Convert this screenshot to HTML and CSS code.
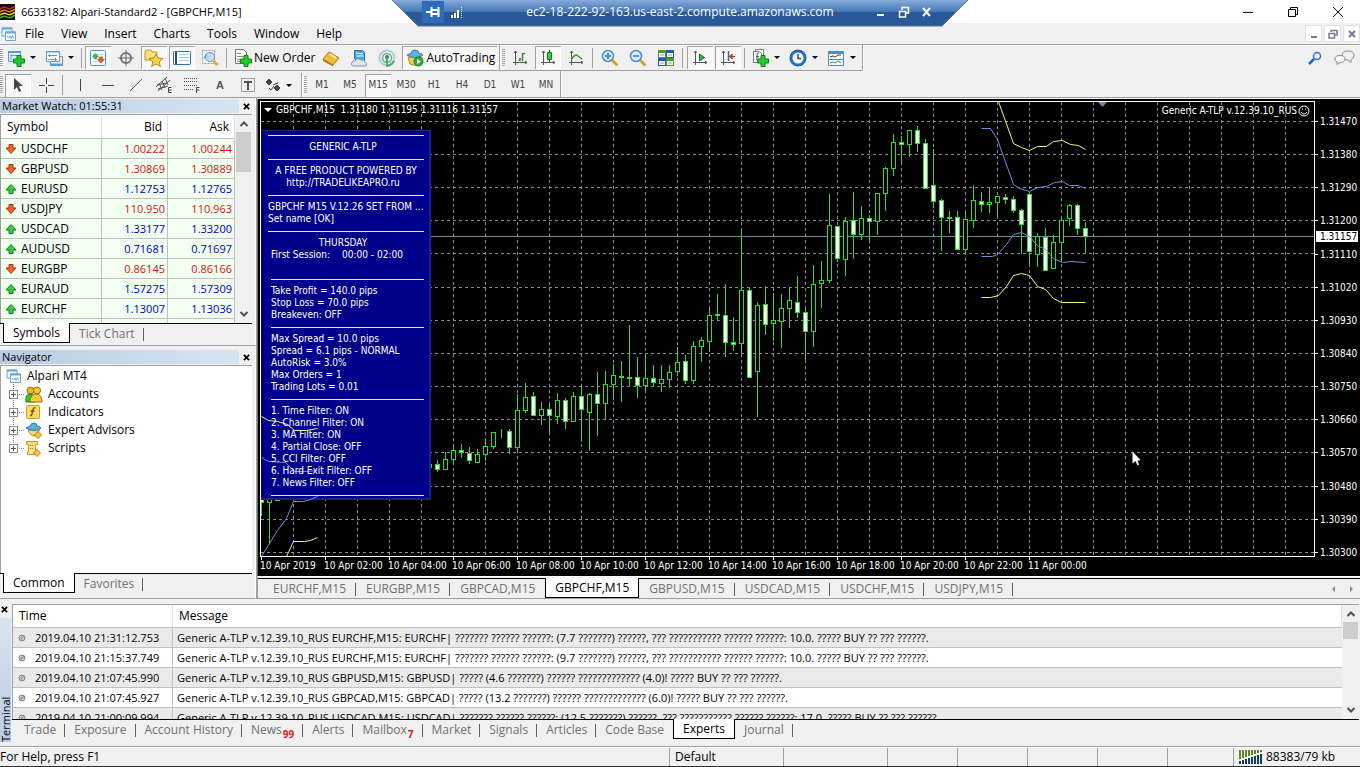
FILE: index.html
```html
<!DOCTYPE html>
<html lang="en">
<head>
<meta charset="utf-8">
<title>6633182: Alpari-Standard2 - [GBPCHF,M15]</title>
<link rel="stylesheet" href="styles.css">
</head>
<body>
<svg class="defs" width="0" height="0" aria-hidden="true">
  <symbol id="i-mt" viewBox="0 0 16 16"><path d="M1 2h10v8H1z" fill="#eaf5fd" stroke="#6ba6d4"/><path d="M1 2.500h10" stroke="#6ba6d4" stroke-width="2"/><path d="M4.500 6h10v8.500h-10z" fill="#fff" stroke="#6ba6d4"/><path d="M4.500 6.500h10" stroke="#6ba6d4" stroke-width="2"/><path d="M6 10l1.500 2 1.500-2 1 2.500 1.500-3 1 2.500" fill="none" stroke="#6ba6d4"/></symbol>
  <symbol id="i-down" viewBox="0 0 12 12"><path d="M4 1.500h4V5h3L6 10.500 1 5h3z" fill="#f0642d" stroke="#a8330c"/></symbol>
  <symbol id="i-up" viewBox="0 0 12 12"><path d="M4 10.500h4V7h3L6 1.500 1 7h3z" fill="#3dcc4a" stroke="#0f7a1c"/></symbol>
  <symbol id="i-plus" viewBox="0 0 12 12"><path d="M4 .5h4V4h3.500v4H8v3.500H4V8H.5V4H4z" fill="#22cc2c" stroke="#0b8413"/></symbol>
  <symbol id="i-x" viewBox="0 0 8 8"><path d="M1 1l6 6M7 1L1 7" stroke="currentColor" stroke-width="2"/></symbol>
  <symbol id="i-chup" viewBox="0 0 10 10"><path d="M1.500 7L5 3.500 8.500 7" fill="none" stroke="#505050" stroke-width="2"/></symbol>
  <symbol id="i-chdown" viewBox="0 0 10 10"><path d="M1.500 3L5 6.500 8.500 3" fill="none" stroke="#505050" stroke-width="2"/></symbol>
  <symbol id="i-axes" viewBox="0 0 16 16"><path d="M3.500 1v14M1 12.500h14M2 3l1.500-2L5 3M13 11l2 1.500-2 1.500" fill="none" stroke="#555"/></symbol>
  <symbol id="i-dot" viewBox="0 0 8 8"><circle cx="4" cy="4" r="3" fill="#c4c4c4" stroke="#858585"/><path d="M2.500 5.500l3-3" stroke="#777"/></symbol>
</svg>

<header class="titlebar">
  <svg class="applogo" viewBox="0 0 15 16"><path d="M0 0h15v16H0z" fill="#111"/><g fill="none" stroke-width="1.500"><path d="M0 5q4-3 7-1t8-2" stroke="#d8271c"/><path d="M0 8q4-3 7-1t8-2" stroke="#f07b1e"/><path d="M0 11q4-3 7-1t8-2" stroke="#e8d33a"/><path d="M0 14q4-3 7-1t8-2" stroke="#49b33a"/></g></svg>
  <h1>6633182: Alpari-Standard2 - [GBPCHF,M15]</h1>
  <div class="rdp">
    <svg class="rdpbg" viewBox="0 0 576 27" preserveAspectRatio="none"><defs><linearGradient id="rg" x1="0" y1="0" x2="0" y2="1"><stop offset="0" stop-color="#86abd9"/><stop offset=".46" stop-color="#4377b5"/><stop offset=".47" stop-color="#2a5795"/><stop offset="1" stop-color="#2c5a99"/></linearGradient></defs><path d="M0 0h576l-26 26H26z" fill="url(#rg)"/><path d="M0 0l26 26h524l26-26" fill="none" stroke="#55708f"/></svg>
    <button class="pin" aria-label="Pin"><svg width="14" height="12" viewBox="0 0 14 12"><path d="M0 6h5M5.500 1v10M6 4h6v4H6M12.500 1v10" stroke="#fff" stroke-width="2" fill="none"/></svg></button>
    <svg width="12" height="12" viewBox="0 0 12 12"><path d="M1 12v-3M4 12V7M7 12V4" stroke="#fff" stroke-width="2"/><path d="M10.500 12V1" stroke="#cfe" stroke-dasharray="1 1"/></svg>
    <span class="host">ec2-18-222-92-163.us-east-2.compute.amazonaws.com</span>
    <button aria-label="Minimize session"><svg width="12" height="12"><path d="M2 9h7" stroke="#fff" stroke-width="2"/></svg></button>
    <button aria-label="Restore session"><svg width="12" height="12"><path d="M4 4V1.500h6.500V7H8M1.500 5.500h6V11h-6zM1 5.500h7" fill="none" stroke="#fff" stroke-width="1.500"/></svg></button>
    <button aria-label="Close session"><svg width="12" height="12"><path d="M2 2l7 8M9 2l-7 8" stroke="#fff" stroke-width="2"/></svg></button>
  </div>
  <div class="winbtns">
    <button aria-label="Minimize"><svg width="12" height="12"><path d="M1 6.500h10" stroke="#000"/></svg></button>
    <button aria-label="Restore"><svg width="12" height="12"><path d="M1.500 3.500h7v7h-7zM3.500 3V1.500h7v7H9" fill="none" stroke="#000"/></svg></button>
    <button aria-label="Close"><svg width="12" height="12"><path d="M1 1l10 10M11 1L1 11" stroke="#000"/></svg></button>
  </div>
</header>

<nav class="menubar" aria-label="Main menu">
  <svg width="16" height="16"><use href="#i-mt"/></svg>
  <button>File</button><button>View</button><button>Insert</button><button>Charts</button><button>Tools</button><button>Window</button><button>Help</button>
  <div class="mdibtns">
    <button aria-label="Minimize chart"><svg width="10" height="10"><path d="M2 8h6" stroke="#6f7d8c" stroke-width="2"/></svg></button>
    <button aria-label="Restore chart"><svg width="10" height="10"><path d="M3 3V1.500h6V6H7M1 4.500h5.500V9H1z" fill="none" stroke="#6f7d8c" stroke-width="1.500"/></svg></button>
    <button aria-label="Close chart"><svg width="8" height="8"><use href="#i-x"/></svg></button>
  </div>
</nav>

<div class="toolbar">
  <div class="group">
    <span class="grip"></span>
    <button class="dd" aria-label="New chart"><svg width="18" height="18"><path d="M1.500 2.500h12v10h-12z" fill="#e9f3fb" stroke="#5a9bcd"/><path d="M1 3h13" stroke="#5a9bcd" stroke-width="2"/><path d="M3 6.500h8M4 5v6" stroke="#5a9bcd"/><use href="#i-plus" x="6" y="6" width="12" height="12"/></svg><i class="caret"></i></button>
    <button class="dd" aria-label="Profiles"><svg width="18" height="18"><path d="M5.500 7.500h12v9h-12z" fill="#e9f3fb" stroke="#5a9bcd"/><path d="M5 15.500h13" stroke="#5a9bcd" stroke-width="2"/><path d="M1.500 2.500h13v10h-13z" fill="#fff" stroke="#5a9bcd"/><path d="M1 3h14M3 6.500h9M4.500 5v3M3 10.500h9M10.500 9v3" stroke="#5a9bcd"/></svg><i class="caret"></i></button>
    <span class="sep"></span>
    <button class="on" aria-label="Market Watch"><svg width="18" height="18"><rect x="1.500" y="1.500" width="15" height="15" rx="1" fill="#f4fafe" stroke="#4d92c8"/><path d="M4 5.500h10M4 9h10M4 12.500h10" stroke="#c7dbea"/><use href="#i-up" x="3" y="3" width="7" height="8"/><use href="#i-down" x="8" y="7" width="8" height="8"/></svg></button>
    <button aria-label="Data Window"><svg width="18" height="18"><circle cx="9" cy="9" r="5" fill="none" stroke="#777" stroke-width="2"/><path d="M9 1v16M1 9h16" stroke="#666"/></svg></button>
    <button class="on" aria-label="Navigator"><svg width="20" height="18"><path d="M1 3l1-2h5l1 2h5v8H1z" fill="#f8e07a" stroke="#c1952a"/><path d="M12 5l2 4 5 .5-4 3.500 1.500 4.500-4.500-2.500L7.500 17.500 9 13 5 9.500l5-.5z" fill="#fbd64c" stroke="#b8861e"/></svg></button>
    <button class="on" aria-label="Terminal"><svg width="20" height="16"><rect x="1.500" y="1.500" width="17" height="13" rx="1" fill="#fff" stroke="#2e6fae"/><path d="M4 2v12" stroke="#23517d" stroke-width="2"/><path d="M7 4.500h10M7 7.500h10M7 10.500h10" stroke="#a8cbe8"/></svg></button>
    <button aria-label="Strategy Tester"><svg width="18" height="18"><path d="M1.500 1.500h12v13h-12z" fill="#edf6fc" stroke="#91a4b4" stroke-dasharray="2 1"/><path d="M3 10l2-5 2 5 3-6" fill="none" stroke="#5a8fb8"/><circle cx="9" cy="8" r="4.500" fill="#bcdcf3" fill-opacity=".8" stroke="#7093b0"/><path d="M12.500 12l4 4" stroke="#dba838" stroke-width="3"/></svg></button>
    <span class="sep"></span>
    <button class="txt neworder"><svg width="18" height="18"><path d="M1.500.5h8l3 3v11h-11z" fill="#fff" stroke="#777"/><path d="M3 4.500h4M3 7.500h7M3 10.500h7M3 12.500h4" stroke="#888"/><use href="#i-plus" x="6" y="6" width="12" height="12"/></svg>New Order</button>
    <button aria-label="MetaEditor"><svg width="18" height="18"><path d="M1 10l6-7 10 6-6 7z" fill="#f0bc3c" stroke="#a87414"/><path d="M1 10v2l10 5.500V16z" fill="#b77c16"/><path d="M8 5l6 4" stroke="#ffe9a0" stroke-width="2"/></svg></button>
    <button aria-label="Virtual Hosting"><svg width="18" height="18"><path d="M4.500 1.500h8l2 2v8h-8l-2-2z" fill="#44a5e3" stroke="#2076b8"/><path d="M6 4l7 1M6.500 7h7" stroke="#fff"/><path d="M3 17q-3-1-1-4 1-2 3-1 2-4 6-1 3-1 4 2 3 1 1 4z" fill="#dfe6ee" stroke="#8092a8"/></svg></button>
    <button aria-label="Signals"><svg width="18" height="18"><g fill="none"><circle cx="9" cy="9" r="7.500" stroke="#b4cbd9" stroke-width="2"/><circle cx="9" cy="9" r="4.500" stroke="#72a9a6" stroke-width="1.500"/></g><circle cx="9" cy="8" r="2" fill="#2b8c53"/><path d="M9 9v8q5-1 7-5" fill="none" stroke="#49b067" stroke-width="2"/></svg></button>
    <button class="txt auto on"><svg width="18" height="18"><path d="M2 8l2 7q5 3 10 0l2-7z" fill="#f3cc4e" stroke="#b38a20"/><path d="M1 6q3-2 4-1 0-4 4-4t4 4q3-1 4 1-8 5-16 0z" fill="#5fb4dd" stroke="#2f7fae"/><circle cx="12.500" cy="12.500" r="4.500" fill="#27b13a" stroke="#0f7f20"/><path d="M11 10l4 2.500-4 2.500z" fill="#fff"/></svg>AutoTrading</button>
    <span class="end"></span>
    <span class="grip"></span>
    <button aria-label="Bar Chart"><svg width="16" height="16"><use href="#i-axes"/><path d="M8 11V8M8 10H6.500M10.500 3v8M10.500 3.500H13" stroke="#3a8a3a" stroke-width="1.500"/></svg></button>
    <button class="on" aria-label="Candlesticks"><svg width="16" height="16"><use href="#i-axes"/><path d="M9.500 0v12" stroke="#0a7a14"/><path d="M7.500 2.500h4v7h-4z" fill="#35d042" stroke="#0a7a14"/></svg></button>
    <button aria-label="Line Chart"><svg width="16" height="16"><use href="#i-axes"/><path d="M4 9q3-6 6-3l4 3" fill="none" stroke="#3a9a3a" stroke-width="1.500"/></svg></button>
    <span class="sep"></span>
    <button aria-label="Zoom In"><svg width="18" height="18"><path d="M10.500 10.500l6 6" stroke="#d6a22e" stroke-width="3"/><circle cx="7" cy="7" r="5.500" fill="#d4ebfa" stroke="#4a8fd0" stroke-width="1.500"/><path d="M4 7h6M7 4v6" stroke="#3578b8" stroke-width="1.500"/></svg></button>
    <button aria-label="Zoom Out"><svg width="18" height="18"><path d="M10.500 10.500l6 6" stroke="#d6a22e" stroke-width="3"/><circle cx="7" cy="7" r="5.500" fill="#d4ebfa" stroke="#4a8fd0" stroke-width="1.500"/><path d="M4 7h6" stroke="#3578b8" stroke-width="1.500"/></svg></button>
    <button aria-label="Tile Windows"><svg width="18" height="18"><path d="M1 1h8v8H1zM9 9h8v8H9z" fill="#4c9c2c"/><path d="M9 1h8v8H9zM1 9h8v8H1z" fill="#2c56a8"/><path d="M2 4h6v4H2zM10 4h6v4h-6zM2 12h6v4H2zM10 12h6v4h-6z" fill="#f4f9ff"/><path d="M3 6h4M11 6h4M3 14h4M11 14h4" stroke="#8ab"/></svg></button>
    <span class="sep"></span>
    <button class="on" aria-label="Auto Scroll"><svg width="16" height="16"><use href="#i-axes"/><path d="M7.500 4l5 3.500-5 3.500z" fill="#2db53a" stroke="#117a1c"/></svg></button>
    <button class="on" aria-label="Chart Shift"><svg width="16" height="16"><use href="#i-axes"/><path d="M8.500 1v10" stroke="#2d63b8" stroke-width="1.500"/><path d="M15 6.500h-4M12.500 4L10 6.500 12.500 9" fill="none" stroke="#b03c14" stroke-width="1.500"/></svg></button>
    <span class="sep"></span>
    <button class="dd" aria-label="Indicators"><svg width="18" height="18"><path d="M4.500.5h8v12h-8z" fill="#fff" stroke="#777"/><path d="M2.500 2.500h6l2 2v9h-8z" fill="#fff" stroke="#777"/><path d="M8 4q-2-1-2 2v5M5 7.500h3" fill="none" stroke="#555"/><use href="#i-plus" x="6" y="6" width="12" height="12"/></svg><i class="caret"></i></button>
    <button class="dd" aria-label="Periods"><svg width="18" height="18"><circle cx="9" cy="9" r="8" fill="#2a74c4" stroke="#19529a"/><circle cx="9" cy="9" r="5.500" fill="#eef5fb"/><path d="M9 5v4.500h3" fill="none" stroke="#444" stroke-width="1.500"/></svg><i class="caret"></i></button>
    <button class="dd" aria-label="Templates"><svg width="18" height="18"><path d="M1.500 2.500h15v14h-15z" fill="#f6fbff" stroke="#4d8dc8"/><path d="M1 3.500h16" stroke="#4d8dc8" stroke-width="3"/><path d="M1 10.500h16" stroke="#4d8dc8"/><path d="M3 8l3-1 2 1 3-2h3" fill="none" stroke="#8a2a1a"/><path d="M3 14l3-1 2 1 3-2 3 2" fill="none" stroke="#3a9a3a"/></svg><i class="caret"></i></button>
  </div>
  <div class="right">
    <button aria-label="Search"><svg width="14" height="14"><circle cx="9" cy="5" r="3.500" fill="#eef5ff" stroke="#3a70d0" stroke-width="1.500"/><path d="M6 8l-5 5" stroke="#2f5fc4" stroke-width="2.500"/></svg></button>
    <button aria-label="Chat"><svg width="22" height="16"><path d="M8 6q0-5 6-5t6 4.500q0 3-3 4v3l-3-2.500q-6 0-6-4z" fill="#f2f2f2" stroke="#8a8a8a"/><path d="M1 9q0-3.500 5-3.500T11 9t-5 3.500l-3 2v-2.500q-2-1-2-3z" fill="#fafafa" stroke="#8a8a8a"/></svg></button>
  </div>
</div>

<div class="toolbar second">
  <div class="group">
    <span class="grip"></span>
    <button class="on" aria-label="Cursor"><svg width="12" height="16"><path d="M2 1v12l3-3 2 5 2-1-2-5h4z" fill="#444"/></svg></button>
    <button aria-label="Crosshair"><svg width="16" height="16"><path d="M8.500 1v6M8.500 10v6M1 8.500h6M10 8.500h6" stroke="#444"/></svg></button>
    <span class="sep"></span>
    <button aria-label="Vertical Line"><svg width="16" height="16"><path d="M8.500 2v12" stroke="#444"/></svg></button>
    <button aria-label="Horizontal Line"><svg width="16" height="16"><path d="M2 8.500h12" stroke="#444"/></svg></button>
    <button aria-label="Trendline"><svg width="16" height="16"><path d="M2 14L14 2" stroke="#555"/></svg></button>
    <button aria-label="Equidistant Channel"><svg width="18" height="18"><path d="M1 11L12 1M3 15L15 4M4 7l3 7M7 5l3 7M10 2l3 7M2 9l10-2M3 13l10-3" stroke="#555"/><path d="M16.500 11.500h-3v5h3M13.500 14h3" fill="none" stroke="#444"/></svg></button>
    <button aria-label="Fibonacci"><svg width="18" height="18"><path d="M1 2.500h14M1 5.500h14M1 9.500h14M1 13.500h9" stroke="#555" stroke-dasharray="1 1"/><path d="M13.500 17v-5.500h3M13.500 14h3" fill="none" stroke="#444"/></svg></button>
    <button class="letter" aria-label="Text">A</button>
    <button aria-label="Text Label"><svg width="16" height="16"><path d="M1.500 1.500h13v13h-13z" fill="none" stroke="#555" stroke-dasharray="1 1"/><path d="M4 5h8M8 5v8" stroke="#555" stroke-width="2"/></svg></button>
    <button class="dd" aria-label="Arrows"><svg width="16" height="16"><path d="M4 2l3 3-3 3-3-3zM8 8l5-2M12 8l3 3-3 3-3-3z" fill="#444" stroke="#444"/><path d="M4 11l2 2 3-4" fill="none" stroke="#444"/></svg><i class="caret"></i></button>
    <span class="end"></span>
    <span class="grip"></span>
    <button class="tf">M1</button><button class="tf">M5</button><button class="tf on">M15</button><button class="tf">M30</button><button class="tf">H1</button><button class="tf">H4</button><button class="tf">D1</button><button class="tf">W1</button><button class="tf">MN</button>
  </div>
</div>

<main>
  <aside class="side">
    <section class="panel market">
      <header><h2>Market Watch: 01:55:31</h2><button aria-label="Close Market Watch"><svg width="7" height="7"><use href="#i-x"/></svg></button></header>
      <div class="scrollbox">
        <table class="quotes">
          <colgroup><col class="sym"><col class="bid"><col class="ask"></colgroup>
          <thead><tr><th>Symbol</th><th>Bid</th><th>Ask</th></tr></thead>
          <tbody>
            <tr class="dn"><td><svg><use href="#i-down"/></svg>USDCHF</td><td>1.00222</td><td>1.00244</td></tr>
            <tr class="dn"><td><svg><use href="#i-down"/></svg>GBPUSD</td><td>1.30869</td><td>1.30889</td></tr>
            <tr><td><svg><use href="#i-up"/></svg>EURUSD</td><td>1.12753</td><td>1.12765</td></tr>
            <tr class="dn"><td><svg><use href="#i-down"/></svg>USDJPY</td><td>110.950</td><td>110.963</td></tr>
            <tr><td><svg><use href="#i-up"/></svg>USDCAD</td><td>1.33177</td><td>1.33200</td></tr>
            <tr><td><svg><use href="#i-up"/></svg>AUDUSD</td><td>0.71681</td><td>0.71697</td></tr>
            <tr class="dn"><td><svg><use href="#i-down"/></svg>EURGBP</td><td>0.86145</td><td>0.86166</td></tr>
            <tr><td><svg><use href="#i-up"/></svg>EURAUD</td><td>1.57275</td><td>1.57309</td></tr>
            <tr><td><svg><use href="#i-up"/></svg>EURCHF</td><td>1.13007</td><td>1.13036</td></tr>
            <tr><td></td><td></td><td></td></tr>
          </tbody>
        </table>
        <div class="sbar"><svg width="10" height="10"><use href="#i-chup"/></svg><span class="thumb tall"></span><svg width="10" height="10"><use href="#i-chdown"/></svg></div>
      </div>
      <div class="tabs"><button class="cur">Symbols</button><button>Tick Chart</button></div>
    </section>
    <section class="panel navi">
      <header><h2>Navigator</h2><button aria-label="Close Navigator"><svg width="7" height="7"><use href="#i-x"/></svg></button></header>
      <ul class="tree">
        <li class="root"><svg width="16" height="16"><use href="#i-mt"/></svg>Alpari MT4</li>
        <li><i class="box"></i><svg width="18" height="17"><circle cx="5.500" cy="4.500" r="3.500" fill="#e9b91c" stroke="#96700a"/><circle cx="12" cy="4.500" r="3.500" fill="#f2ca33" stroke="#96700a"/><path d="M1 16q-1-8 4-8t5 8z" fill="#35c435" stroke="#168016"/><path d="M5 16q0-8 6-8t6 8z" fill="#f2ca33" stroke="#96700a"/></svg>Accounts</li>
        <li><i class="box"></i><svg width="18" height="17"><rect x="1.500" y="1.500" width="13" height="13" rx="1" fill="#fbdc68" stroke="#c89d27"/><path d="M10.500 4q-2-1-2.500 2l-1 4q-.5 2-2 1.500M5.500 7h4" fill="none" stroke="#7d5a08" stroke-width="1.500"/></svg>Indicators</li>
        <li><i class="box"></i><svg width="18" height="17"><path d="M3 8q2 6 7 6l5-6z" fill="#f7d66a" stroke="#b58a2a"/><path d="M1 6q3-2 4-2 1-3 4-3t3 3q3 0 4 2-7 5-15 0z" fill="#55b0dd" stroke="#2f7fae"/><path d="M13 9.500l3.500 3.500-3.500 3.500L9.500 13z" fill="#f4c64a" stroke="#b07f1a"/></svg>Expert Advisors</li>
        <li><i class="box"></i><svg width="18" height="17"><path d="M1.500 1.500h11v3h-2v7h2v3h-10v-3h1v-7h-2z" fill="#fae08a" stroke="#c09a30"/><path d="M5 5.500h4M5 8.500h4" stroke="#a57c1b" stroke-dasharray="1 1"/><path d="M12 9.500l3.500 3.500-3.500 3.500L8.500 13z" fill="#f4c64a" stroke="#b07f1a"/></svg>Scripts</li>
      </ul>
      <div class="tabs"><button class="cur">Common</button><button>Favorites</button></div>
    </section>
  </aside>

  <section class="work">
    <div class="chart">
      <div class="plot">
        <svg id="plot" class="canvas" width="100%" height="100%" aria-label="GBPCHF M15 candlestick chart"></svg>
        <div class="caption"><i class="tri"></i><span>GBPCHF,M15&nbsp; 1.31180 1.31195 1.31116 1.31157</span></div>
        <div class="expert">Generic A-TLP v.12.39.10_RUS<svg width="12" height="12"><circle cx="6" cy="6" r="5" fill="none" stroke="#fff"/><path d="M3 7q3 4 6 0M4 4h1M7 4h1" fill="none" stroke="#fff"/></svg></div>
        <div class="info">
          <hr>
          <p class="mid">GENERIC A-TLP</p>
          <hr>
          <p class="mid wide">A FREE PRODUCT POWERED BY</p>
          <p class="mid">http://TRADELIKEAPRO.ru</p>
          <hr>
          <p class="out">GBPCHF M15 V.12.26 SET FROM ...</p>
          <p class="out">Set name [OK]</p>
          <hr>
          <p class="mid">THURSDAY</p>
          <p class="two"><span>First Session:</span><span>00:00 - 02:00</span></p>
          <p>&nbsp;</p>
          <hr class="in">
          <p>Take Profit = 140.0 pips</p>
          <p>Stop Loss = 70.0 pips</p>
          <p>Breakeven: OFF</p>
          <hr class="in">
          <p>Max Spread = 10.0 pips</p>
          <p>Spread = 6.1 pips - NORMAL</p>
          <p>AutoRisk = 3.0%</p>
          <p>Max Orders = 1</p>
          <p>Trading Lots = 0.01</p>
          <hr class="in">
          <p>1. Time Filter: ON</p>
          <p>2. Channel Filter: ON</p>
          <p>3. MA Filter: ON</p>
          <p>4. Partial Close: OFF</p>
          <p>5. CCI Filter: OFF</p>
          <p>6. Hard Exit Filter: OFF</p>
          <p>7. News Filter: OFF</p>
          <hr class="in">
        </div>
        <svg class="cursor" width="8" height="15"><path d="M.5.5v12l3-2.500 2 4.500 1.500-1-1.500-4H9z" fill="#fff"/></svg>
      </div>
      <div class="scale"><span>1.31470</span><span>1.31380</span><span>1.31290</span><span>1.31200</span><span>1.31110</span><span>1.31020</span><span>1.30930</span><span>1.30840</span><span>1.30750</span><span>1.30660</span><span>1.30570</span><span>1.30480</span><span>1.30390</span><span>1.30300</span><b>1.31157</b></div>
      <div class="times"><span>10 Apr 2019</span><span>10 Apr 02:00</span><span>10 Apr 04:00</span><span>10 Apr 06:00</span><span>10 Apr 08:00</span><span>10 Apr 10:00</span><span>10 Apr 12:00</span><span>10 Apr 14:00</span><span>10 Apr 16:00</span><span>10 Apr 18:00</span><span>10 Apr 20:00</span><span>10 Apr 22:00</span><span>11 Apr 00:00</span></div>
    </div>
    <div class="charttabs">
      <div class="tabs"><button>EURCHF,M15</button><button>EURGBP,M15</button><button>GBPCAD,M15</button><button class="cur">GBPCHF,M15</button><button>GBPUSD,M15</button><button>USDCAD,M15</button><button>USDCHF,M15</button><button>USDJPY,M15</button></div>
      <div class="arrows"><button aria-label="Previous tab"><svg width="5" height="8"><path d="M4 1v6L1 4z" fill="#888"/></svg></button><button aria-label="Next tab"><svg width="5" height="8"><path d="M1 1v6l3-3z" fill="#888"/></svg></button></div>
    </div>
  </section>
</main>

<section class="terminal">
  <div class="strip"><button aria-label="Close Terminal"><svg width="7" height="7"><use href="#i-x"/></svg></button><h2>Terminal</h2></div>
  <div class="termbody">
    <div class="scrollbox">
      <table class="log">
        <colgroup><col class="time"><col></colgroup>
        <thead><tr><th>Time</th><th>Message</th></tr></thead>
        <tbody>
          <tr><td><svg><use href="#i-dot"/></svg>2019.04.10 21:31:12.753</td><td>Generic A-TLP v.12.39.10_RUS EURCHF,M15: EURCHF| ??????? ?????? ??????: (7.7 ???????) ??????, ??? ??????????? ?????? ??????: 10.0. ????? BUY ?? ??? ??????.</td></tr>
          <tr><td><svg><use href="#i-dot"/></svg>2019.04.10 21:15:37.749</td><td>Generic A-TLP v.12.39.10_RUS EURCHF,M15: EURCHF| ??????? ?????? ??????: (9.7 ???????) ??????, ??? ??????????? ?????? ??????: 10.0. ????? BUY ?? ??? ??????.</td></tr>
          <tr><td><svg><use href="#i-dot"/></svg>2019.04.10 21:07:45.990</td><td>Generic A-TLP v.12.39.10_RUS GBPUSD,M15: GBPUSD| ????? (4.6 ???????) ?????? ????????????? (4.0)! ????? BUY ?? ??? ??????.</td></tr>
          <tr><td><svg><use href="#i-dot"/></svg>2019.04.10 21:07:45.927</td><td>Generic A-TLP v.12.39.10_RUS GBPCAD,M15: GBPCAD| ????? (13.2 ???????) ?????? ????????????? (6.0)! ????? BUY ?? ??? ??????.</td></tr>
          <tr><td><svg><use href="#i-dot"/></svg>2019.04.10 21:00:09.994</td><td>Generic A-TLP v.12.39.10_RUS USDCAD,M15: USDCAD| ??????? ?????? ??????: (12.5 ???????) ??????, ??? ??????????? ?????? ??????: 17.0. ????? BUY ?? ??? ??????</td></tr>
        </tbody>
      </table>
      <div class="sbar"><svg width="10" height="10"><use href="#i-chup"/></svg><span class="thumb"></span><svg width="10" height="10"><use href="#i-chdown"/></svg></div>
    </div>
    <div class="tabs"><button>Trade</button><button>Exposure</button><button>Account History</button><button>News<sub>99</sub></button><button>Alerts</button><button>Mailbox<sub>7</sub></button><button>Market</button><button>Signals</button><button>Articles</button><button>Code Base</button><button class="cur">Experts</button><button>Journal</button></div>
  </div>
</section>

<footer class="status">
  <span class="help">For Help, press F1</span><span class="profile">Default</span><span class="w104"></span><span class="w70"></span><span class="w70"></span><span class="w70"></span><span class="w70"></span><span class="w66"></span>
  <span class="net"><svg width="24" height="14"><g stroke-width="2"><path d="M1 0v9M4 0v8M7 0v7M10 0v6M13 0v5M16 0v4M19 0v3M22 0v2" stroke="#6d8020"/><path d="M1 11v3M4 10v4M7 9v5M10 8v6M13 7v7M16 6v8M19 5v9M22 4v10" stroke="#123f5c"/></g></svg>88383/79 kb</span>
</footer>
<script src="chart.js"></script>
</body>
</html>
```

FILE: styles.css
```css
* { box-sizing: border-box; }
body {
  margin: 0;
  height: 100vh;
  display: flex;
  flex-direction: column;
  overflow: hidden;
  background: #f0f0f0;
  color: #000;
  font: 12px/16px "Open Sans", "Noto Sans", sans-serif;
}
button {
  border: 0;
  padding: 0;
  margin: 0;
  background: none;
  color: inherit;
  font: inherit;
  display: flex;
  align-items: center;
  justify-content: center;
  white-space: nowrap;
}
svg { display: block; flex: none; }
.defs { position: absolute; }
h1, h2 { margin: 0; font-size: 11px; font-weight: 400; white-space: nowrap; }
table { border-collapse: separate; border-spacing: 0; table-layout: fixed; width: 100%; }
th { font-weight: 400; text-align: left; }

.titlebar { position: relative; flex: none; height: 23px; background: #fff; display: flex; align-items: center; gap: 6px; }
.applogo { width: 15px; height: 16px; }
.winbtns { margin-left: auto; display: flex; }
.winbtns button { width: 45px; height: 22px; }
.rdp { position: absolute; z-index: 5; left: 392px; right: 392px; top: 0; height: 27px; padding: 0 33px 3px 30px; display: flex; align-items: center; color: #fff; gap: 7px; }
.rdpbg { position: absolute; inset: 0; width: 100%; height: 100%; }
.rdp > *:not(.rdpbg) { position: relative; }
.rdp .host { flex: 1; text-align: center; padding-left: 24px; }
.rdp button { width: 16px; height: 22px; }
.rdp .pin { width: 22px; background: #2d6db8; }

.menubar { flex: none; height: 22px; display: flex; align-items: center; gap: 5px; border-bottom: 1px solid #a0a0a0; box-shadow: 0 1px #fff; padding-left: 1px; }
.menubar > button { padding: 0 6px; }
.menubar > svg { margin-right: -3px; }
.mdibtns { margin-left: auto; display: flex; gap: 2px; }
.mdibtns button { width: 17px; height: 17px; background: #fff; border: 1px solid #e2e2e2; color: #6f7d8c; }

.toolbar { flex: none; height: 26px; display: flex; align-items: stretch; justify-content: space-between; }
.toolbar .group { display: flex; align-items: center; border-right: 1px solid #a0a0a0; border-bottom: 1px solid #a0a0a0; box-shadow: 1px 0 #fff; }
.toolbar button { width: 28px; height: 23px; }
.toolbar button.on { width: 26px; margin: 0 1px; background: #f8f8f8; box-shadow: inset 1px 1px #a0a0a0, inset -1px -1px #fff; }
.toolbar button.dd { width: 38px; gap: 5px; justify-content: flex-start; padding-left: 3px; }
.toolbar button.txt { width: auto; gap: 2px; }
.toolbar button.txt.on { width: auto; padding: 0 2px 0 4px; }
.toolbar .neworder { margin: 0 2px 0 4px; }
.caret { border: 3px solid transparent; border-top: 3px solid #000; border-bottom: 0; }
.grip { width: 3px; height: 18px; margin: 0 1px 0 0; background: repeating-linear-gradient(#a8a8a8 0 1px, #f0f0f0 1px 2px); }
.sep { width: 1px; height: 20px; margin: 0 3px 0 2px; background: #a0a0a0; }
.dd + .sep { margin: 0 2px 0 1px; }
.end { width: 1px; align-self: stretch; margin: 0 2px 0 1px; background: #a0a0a0; box-shadow: 1px 0 #fff; }
.toolbar .right { display: flex; align-items: center; }
.toolbar .right button { width: 30px; }
.toolbar.second { height: 27px; border-bottom: 1px solid #a0a0a0; }
.second .group { border-bottom: 0; padding-top: 2px; }
.second button { color: #444; }
.second button.tf { font: 10px/14px "DejaVu Sans Condensed", "DejaVu Sans", sans-serif; }
.second button.letter { font: 700 11px/14px "Liberation Sans", sans-serif; color: #555; }

main { flex: 1; min-height: 0; display: flex; }
.side { flex: none; width: 257px; display: flex; flex-direction: column; gap: 3px; border-right: 1px solid #a0a0a0; }
.panel { display: flex; flex-direction: column; padding: 1px 3px 5px 0; border-bottom: 1px solid #a0a0a0; border-right: 1px solid #fff; }
.market { flex: none; height: 248px; padding-bottom: 2px; }
.navi { flex: 1; min-height: 0; }
.panel > header { flex: none; display: flex; justify-content: space-between; height: 16px; padding-right: 1px; background: linear-gradient(90deg, #b9cce1, #d7e4f2) no-repeat 0 0 / 239px 14px; border-bottom: 1px solid #a0a0a0; }
.panel > header h2 { line-height: 14px; padding-left: 2px; }
.panel > header button { width: 9px; }
.scrollbox { flex: 1; min-height: 0; overflow: hidden; display: flex; align-items: stretch; border-left: 1px solid #a0a0a0; background: #fff; }
.scrollbox table { flex: 1; align-self: flex-start; min-width: 0; }
.sbar { flex: none; width: 17px; background: #f0f0f0; display: flex; flex-direction: column; align-items: center; padding: 4px 0; }
.sbar svg:last-child { margin-top: auto; }
.thumb { width: 15px; height: 17px; margin-top: 3px; background: #cdcdcd; }
.thumb.tall { height: 40px; }
.quotes .sym { width: 101px; }
.quotes .bid { width: 66px; }
.quotes th { height: 24px; padding: 0 5px 0 6px; border-bottom: 1px solid #c0c0c0; border-right: 1px solid #e0e0e0; }
.quotes td { height: 20px; padding: 0 2px 0 4px; background: #f0fff0; border-bottom: 1px solid #c0c0c0; border-right: 1px solid #c0c0c0; color: #0000c8; font-size: 11px; text-align: right; }
.quotes th:nth-child(n+2) { text-align: right; }
.quotes td:first-child { color: #000; font-size: 12px; text-align: left; }
.quotes .dn td:not(:first-child) { color: #d01414; }
.quotes td svg { width: 12px; height: 12px; display: inline-block; vertical-align: -2px; margin-right: 4px; }

.tabs { flex: none; display: flex; align-items: flex-start; height: 20px; border-top: 1px solid #000; color: #707070; padding-left: 3px; }
.tabs button { height: 19px; padding: 0 9px; position: relative; }
.tabs button::after { content: ""; position: absolute; right: 0; top: 4px; height: 13px; border-right: 1px solid #606060; }
.tabs button:has(+ .cur)::after, .tabs .cur::after { display: none; }
.tabs .cur { background: #fff; color: #000; border: 1px solid #000; border-top: 0; margin-top: -1px; padding-top: 1px; height: 20px; }
.tree { flex: 1; margin: 0; list-style: none; background: #fff; border-left: 1px solid #a0a0a0; padding: 1px 0 0 5px; }
.tree li { height: 18px; display: flex; align-items: center; gap: 4px; padding-left: 3px; }
.tree li.root { padding-left: 0; }
.tree .box { position: relative; width: 9px; height: 9px; border: 1px solid #8a8a8a; background: linear-gradient(#3c5a96, #3c5a96) center / 5px 1px no-repeat, linear-gradient(#3c5a96, #3c5a96) center / 1px 5px no-repeat, #fff; margin-right: 3px; }
.tree .box::after { content: ""; position: absolute; left: 9px; top: 3px; width: 5px; border-top: 1px dotted #888; }
.tree .box::before { content: ""; position: absolute; left: 3px; top: -9px; height: 7px; border-left: 1px dotted #888; }
.tree li svg { margin-right: 1px; }

.work { flex: 1; min-width: 0; display: flex; flex-direction: column; }
.chart { flex: 1; min-height: 0; margin-top: 1px; display: grid; grid-template: minmax(0, 1fr) 19px / minmax(0, 1fr) 45px; background: #000; color: #fff; border-left: 1px solid #696969; padding: 2px 0 0 2px; font: 10px/12px "DejaVu Sans Condensed", "DejaVu Sans", sans-serif; }
.plot { position: relative; overflow: hidden; border: 1px solid #fff; }
.canvas { position: absolute; inset: 0; }
.caption { position: absolute; left: 3px; top: 2px; display: flex; align-items: center; gap: 4px; white-space: nowrap; }
.tri { border: 4px solid transparent; border-top: 4px solid #fff; border-bottom: 0; }
.expert { position: absolute; right: 4px; top: 3px; display: flex; gap: 1px; }
.info { position: absolute; left: 0; top: 27px; width: 170px; padding: 0 6px 0 10px; }
.info p { margin: 0; white-space: nowrap; }
.info hr { height: 1px; margin: 6px 1px 5px -3px; border: 0; background: #e8e8ff; }
.info hr.in { margin-left: 0; }
.info .mid { text-align: center; padding-right: 10px; }
.info .wide { padding-right: 4px; }
.info .out { margin-left: -3px; }
.info .two { display: flex; gap: 12px; }
.cursor { position: absolute; left: 871px; top: 349px; }
.scale { position: relative; grid-row: span 2; grid-column: 2; display: flex; flex-direction: column; justify-content: space-between; padding: 15px 0 17px 0; }
.scale span::before { content: ""; display: inline-block; width: 3px; height: 1px; background: #fff; vertical-align: 3px; margin-right: 2px; }
.scale b { position: absolute; left: 1px; top: 130px; width: 42px; line-height: 11px; padding-left: 4px; background: #fff; color: #000; font-weight: 400; }
.times { grid-row: 2; grid-column: 1; display: flex; overflow: hidden; line-height: 18px; }
.times span { flex: none; width: 64px; white-space: nowrap; background: linear-gradient(#fff, #fff) 1px 0 / 1px 3px no-repeat; }
.charttabs { flex: none; height: 23px; display: flex; justify-content: space-between; border-left: 1px solid #a0a0a0; border-top: 1px solid #fff; border-bottom: 1px solid #a0a0a0; padding-top: 1px; }
.charttabs .tabs { flex: 1; padding-left: 5px; }
.charttabs .tabs button { padding: 0 10px; }
.charttabs .tabs .cur { padding: 1px 9px 0; }
.arrows { display: flex; gap: 13px; padding-right: 6px; border-top: 1px solid #000; }

.terminal { flex: none; height: 146px; margin-top: 2px; display: flex; border-bottom: 1px solid #a0a0a0; box-shadow: 0 1px #fff; }
.strip { width: 12px; display: flex; flex-direction: column; gap: 4px; padding: 3px 0 4px 0; }
.strip button { width: 8px; height: 10px; }
.strip h2 { flex: 1; width: 11px; writing-mode: vertical-rl; transform: rotate(180deg); line-height: 11px; background: linear-gradient(#b9cce1, #d7e4f2); }
.termbody { flex: 1; min-width: 0; display: flex; flex-direction: column; padding: 3px 1px 5px 0; }
.termbody .scrollbox { border-top: 1px solid #a0a0a0; }
.log .time { width: 160px; }
.log th { height: 23px; padding: 0 6px; border-bottom: 1px solid #c0c0c0; border-right: 1px solid #e0e0e0; }
.log td { height: 20px; padding: 0 4px; border-bottom: 1px solid #c0c0c0; font-size: 11px; white-space: nowrap; overflow: hidden; }
.log td:first-child { border-right: 1px solid #c0c0c0; padding-left: 5px; }
.log tbody tr:nth-child(odd) td { background: #eaeaea; }
.log td svg { width: 8px; height: 8px; display: inline-block; vertical-align: 0; margin-right: 9px; }
.terminal .tabs { height: 22px; }
.terminal sub { font-size: 10px; line-height: 10px; font-weight: 700; color: #dc2020; align-self: flex-end; margin-left: 1px; }

.status { flex: none; height: 19px; display: flex; align-items: stretch; border-bottom: 1px solid #303030; margin-top: 1px; line-height: 18px; white-space: nowrap; }
.status span { border-left: 1px solid #a0a0a0; padding-left: 5px; }
.status .help { flex: 1; border: 0; padding: 0; }
.w104 { width: 104px; }
.w70 { width: 70px; }
.w66 { width: 66px; }
.profile { width: 114px; }
.net { width: 127px; display: flex; align-items: center; gap: 3px; }
```

FILE: chart.js
```js
const NS = "http://www.w3.org/2000/svg";
const root = document.getElementById("plot");
// Chart space starts at (261, 102); bars are 8 units apart.
const layer = document.createElementNS(NS, "g");
layer.setAttribute("transform", "translate(-261 -102)");
root.appendChild(layer);

function add(tag, attrs) {
  const el = document.createElementNS(NS, tag);
  for (const key in attrs) el.setAttribute(key, attrs[key]);
  layer.appendChild(el);
}

const grid = { stroke: "#838d9c", "stroke-dasharray": "3 3", "shape-rendering": "crispEdges" };
[121, 154, 187, 220, 253, 287, 320, 353, 386, 419, 452, 486, 519, 552].forEach(y =>
  add("path", { ...grid, d: `M261 ${y}.5H4000` }));
for (let x = 293; x < 4000; x += 32) add("path", { ...grid, d: `M${x}.5 102V2000` });

add("path", { d: "M261 236.5H4000", stroke: "#778899", "shape-rendering": "crispEdges" });
add("path", { d: "M1098 102h9l-4.5 5z", fill: "#778899" });

// high, body top, body bottom, low, filled
const bars = [
  [460,464,469,471,1],[452,459,469,469,0],[445,450,459,463,0],[444,450,452,457,1],[447,453,460,463,1],
  [449,454,462,462,0],[440,446,454,460,0],[432,432,446,448,0],[429,432,432,437,0],[429,431,447,453,1],
  [394,410,447,452,0],[383,397,410,412,0],[392,396,415,415,1],[402,409,415,424,0],[403,409,415,434,1],
  [393,400,416,423,0],[398,400,421,428,1],[392,396,421,421,0],[386,396,409,441,1],[393,394,412,450,0],
  [372,394,403,435,1],[371,384,403,418,0],[364,375,384,399,0],[361,376,377,401,1],[325,377,378,385,1],
  [357,377,385,397,1],[355,378,385,390,0],[365,378,382,386,1],[365,379,383,391,0],[365,372,379,387,0],
  [347,362,371,375,0],[355,361,380,383,1],[341,346,380,383,0],[337,340,346,361,0],[309,315,341,351,0],
  [294,314,315,319,1],[284,315,342,356,1],[317,342,344,350,1],[230,290,343,355,0],[288,290,377,377,1],
  [302,305,371,416,0],[286,304,324,334,1],[293,320,323,340,0],[294,308,321,347,0],[288,300,308,327,0],
  [276,302,312,317,1],[309,312,331,360,1],[265,284,331,346,0],[261,280,283,307,0],[194,225,280,282,0],
  [226,226,258,261,1],[217,221,259,275,0],[192,220,234,258,1],[206,218,234,239,0],[215,218,221,242,1],
  [193,193,221,234,0],[167,168,193,210,0],[134,142,168,175,0],[136,142,144,163,1],[130,130,144,156,0],
  [126,130,143,151,1],[139,143,188,188,1],[149,185,201,207,1],[199,200,217,250,1],[211,217,218,232,1],
  [211,217,249,249,1],[212,219,249,253,0],[185,200,220,227,0],[192,201,204,211,1],[187,202,204,212,0],
  [196,196,202,216,0],[194,197,199,203,1],[196,199,210,212,1],[209,210,224,253,1],[194,194,251,264,1],
  [233,236,254,266,0],[228,237,270,270,1],[235,242,268,268,0],[218,220,242,261,0],[204,205,218,225,0],
  [204,205,228,234,1],[222,228,236,252,1]
];

function candle(x, [high, top, bottom, low, filled]) {
  const base = { stroke: "#2fdc2f", "shape-rendering": "crispEdges" };
  add("path", { ...base, d: `M${x + .5} ${high}V${low + 1}` });
  add("rect", { ...base, x: x - 1.5, y: top + .5, width: 4, height: bottom - top, fill: filled ? "#f4fff4" : "#000" });
}
bars.forEach((bar, i) => candle(437 + i * 8, bar));
candle(429, [460,464,467,470,0]);
candle(277, [490,496,500,500,0]);
candle(269, [490,494,502,543,0]);
candle(261, [490,494,502,515,1]);

add("rect", { x: 261, y: 130, width: 170, height: 370, fill: "#1e1e90" });
add("rect", { x: 261, y: 131, width: 168, height: 367, fill: "#00008b" });

function line(points, color) {
  add("polyline", { points, fill: "none", stroke: color, transform: "translate(.5 .5)" });
}
const yellow = "#f4f47a", blue = "#6f8fdc";
line("261,416 268,420 277,421 287,424 294,430 306,430 317,428", yellow);
line("261,457 268,461 285,462 294,471 306,471 317,470", blue);
line("261,556 277,530 286,518 293,501 303,501 310,499 317,496", blue);
line("286,556 293,541 304,541 310,540 317,537", yellow);
line("998,101 1013,143 1021,147 1029,150 1037,146 1046,146 1053,141 1062,140 1070,144 1078,145 1085,149", yellow);
line("981,128 990,128 997,139 1013,184 1019,188 1029,191 1037,187 1046,186 1054,182 1062,181 1069,185 1078,185 1085,188", blue);
line("981,256 992,256 997,254 1006,244 1013,234 1021,232 1029,236 1037,245 1045,249 1053,258 1062,262 1070,261 1085,262", blue);
line("981,297 990,297 998,295 1006,286 1013,275 1021,273 1029,275 1037,286 1045,289 1053,298 1061,302 1085,302", yellow);
```
